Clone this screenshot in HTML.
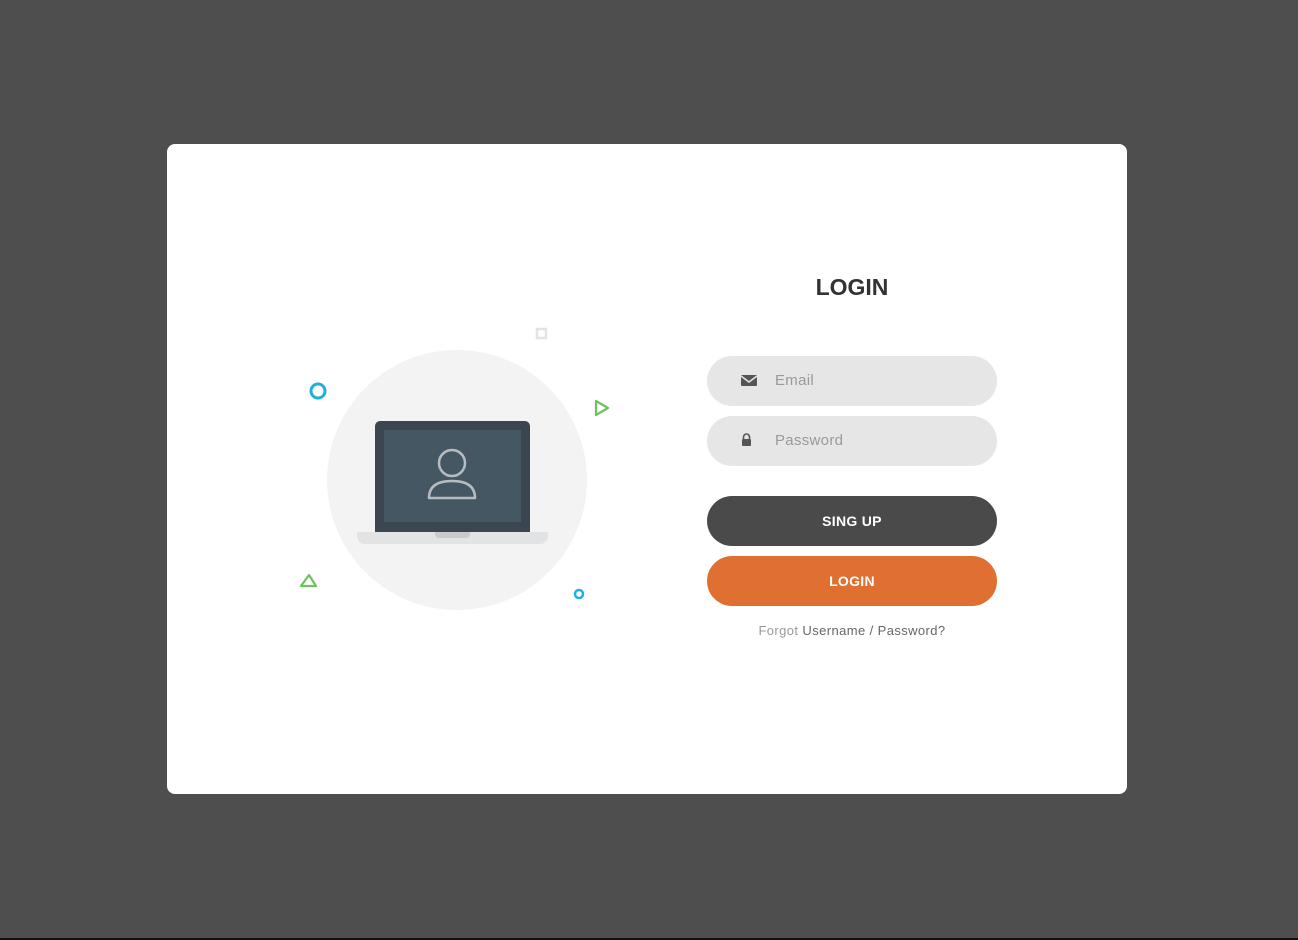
<!DOCTYPE html>
<html><head><style>
*{margin:0;padding:0;box-sizing:border-box}
body{width:1298px;height:940px;background:#4e4e4e;position:relative;font-family:"Liberation Sans",sans-serif;overflow:hidden}
.line{position:absolute;left:0;top:938px;width:1298px;height:2px;background:#111}
.card{position:absolute;left:167px;top:144px;width:960px;height:650px;background:#fff;border-radius:8px}
.a{position:absolute}
.inp{position:absolute;left:707px;width:290px;height:50px;border-radius:25px;background:#e6e6e6;font-size:15px;color:#999;line-height:50px;padding-left:68px;letter-spacing:0.3px}
.btn{position:absolute;left:707px;width:290px;height:50px;border-radius:25px;color:#fff;font-weight:bold;font-size:14px;text-align:center;line-height:50px;letter-spacing:0.3px}
</style></head><body>
<div class="card"></div>
<div class="a" style="left:327px;top:350px;width:260px;height:260px;border-radius:50%;background:#f3f3f3"></div>
<div class="a" style="left:375px;top:421px;width:155px;height:112px;border-radius:5px 5px 0 0;background:#3b4650"></div>
<div class="a" style="left:384px;top:430px;width:137px;height:92px;background:#465764"></div>
<div class="a" style="left:357px;top:532px;width:191px;height:12px;border-radius:0 0 8px 8px;background:#e2e3e5"></div>
<div class="a" style="left:435px;top:532px;width:35px;height:6px;border-radius:0 0 4px 4px;background:#c9cacc"></div>
<svg class="a" style="left:420px;top:445px" width="64" height="60" viewBox="0 0 64 60">
<circle cx="32" cy="18" r="13" fill="none" stroke="#b7bcc0" stroke-width="2.5"/>
<path d="M9 53 Q9 36 32 36 Q55 36 55 53 Z" fill="none" stroke="#b7bcc0" stroke-width="2.5" stroke-linejoin="round"/>
</svg>
<svg class="a" style="left:290px;top:320px" width="340" height="300">
<circle cx="28" cy="71" r="7" fill="none" stroke="#1fb0dc" stroke-width="3"/>
<rect x="247" y="9" width="9" height="9" fill="none" stroke="#e3e3e3" stroke-width="2.5"/>
<path d="M306 81 L318 88 L306 95 Z" fill="none" stroke="#6cc25e" stroke-width="2.2" stroke-linejoin="round"/>
<path d="M19 255 L26 266 L11 266 Z" fill="none" stroke="#6cc25e" stroke-width="2.2" stroke-linejoin="round"/>
<circle cx="289" cy="274" r="4" fill="none" stroke="#1fb0dc" stroke-width="2.5"/>
</svg>
<div class="a" style="left:707px;top:274px;width:290px;text-align:center;font-size:23px;font-weight:bold;color:#333">LOGIN</div>
<div class="inp" style="top:356px">Email</div>
<svg class="a" style="left:741px;top:375px" width="16" height="12"><rect x="0" y="0" width="16" height="11" rx="1" fill="#555"/><path d="M0 1 L8 7 L16 1" stroke="#e6e6e6" stroke-width="1.5" fill="none"/></svg>
<div class="inp" style="top:416px">Password</div>
<svg class="a" style="left:741px;top:433px" width="11" height="13"><path d="M2.5 6 V4 a3 3 0 0 1 6 0 V6" stroke="#555" stroke-width="1.6" fill="none"/><rect x="1" y="6" width="9" height="7" rx="1" fill="#555"/></svg>
<div class="btn" style="top:496px;background:#4a4a4a">SING UP</div>
<div class="btn" style="top:556px;background:#df7031">LOGIN</div>
<div class="a" style="left:707px;top:623px;width:290px;text-align:center;font-size:13px;letter-spacing:0.4px;color:#999">Forgot <span style="color:#666">Username / Password?</span></div>
<div class="line"></div>
</body></html>
